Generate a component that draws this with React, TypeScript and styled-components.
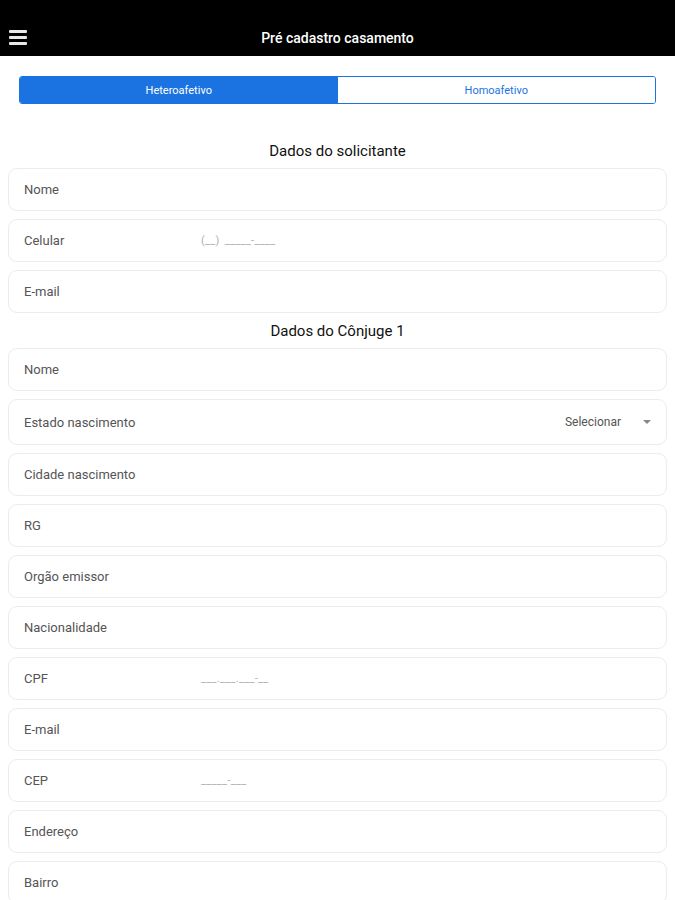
import React from 'react';
import styled, {createGlobalStyle} from 'styled-components';

const GlobalStyle = createGlobalStyle`
  html, body {
    margin: 0;
    padding: 0;
    background: #ffffff;
    font-family: Roboto, "Noto Sans", Arial, sans-serif;
  }
`;

type Field = {
  label: string,
  mask?: string,
  select?: boolean,
};

const solicitante: Field[] = [
  {label: 'Nome'},
  {label: 'Celular', mask: '(__) _____-____'},
  {label: 'E-mail'},
];

const conjuge: Field[] = [
  {label: 'Nome'},
  {label: 'Estado nascimento', select: true},
  {label: 'Cidade nascimento'},
  {label: 'RG'},
  {label: 'Orgão emissor'},
  {label: 'Nacionalidade'},
  {label: 'CPF', mask: '___.___.___-__'},
  {label: 'E-mail'},
  {label: 'CEP', mask: '_____-___'},
  {label: 'Endereço'},
  {label: 'Bairro'},
];

const FormField = ({label, mask, select}: Field) => (
  <Row tall={select}>
    <Label>{label}</Label>
    {mask && <Mask>{mask}</Mask>}
    {select && (
      <Select>
        Selecionar
        <Caret/>
      </Select>
    )}
  </Row>
);

const App = () => {
  return (
    <Page>
      <GlobalStyle/>
      <Header>
        <Menu>
          <span/><span/><span/>
        </Menu>
        <Title>Pré cadastro casamento</Title>
      </Header>
      <Segment>
        <SegButton active>Heteroafetivo</SegButton>
        <SegButton>Homoafetivo</SegButton>
      </Segment>
      <Section top={37}>
        <SectionTitle>Dados do solicitante</SectionTitle>
        {solicitante.map((f, i) => <FormField key={i} {...f}/>)}
      </Section>
      <Section top={8}>
        <SectionTitle>Dados do Cônjuge 1</SectionTitle>
        {conjuge.map((f, i) => <FormField key={i} {...f}/>)}
      </Section>
    </Page>
  );
}

const Page = styled.div`
  width: 675px;
  height: 900px;
  overflow: hidden;
  background: #fff;
`

const Header = styled.div`
  height: 56px;
  background: #000;
  display: flex;
  align-items: flex-end;
  justify-content: center;
  position: relative;
  padding-bottom: 9px;
  box-sizing: border-box;
`

const Menu = styled.div`
  position: absolute;
  left: 9px;
  top: 30px;
  width: 18px;
  display: flex;
  flex-direction: column;
  gap: 3px;
  span {
    display: block;
    height: 3px;
    background: #e8e8e8;
    border-radius: 1px;
  }
`

const Title = styled.div`
  color: #fff;
  font-size: 14px;
  font-weight: 500;
  line-height: 18px;
`

const Segment = styled.div`
  display: flex;
  margin: 20px 19px 0 19px;
  height: 28px;
  border: 1px solid #1a73e0;
  border-radius: 3px;
  overflow: hidden;
  box-sizing: border-box;
`

const SegButton = styled.div<{active?: boolean}>`
  flex: 1;
  display: flex;
  align-items: center;
  justify-content: center;
  font-size: 11px;
  background: ${p => p.active ? '#1a73e0' : '#fff'};
  color: ${p => p.active ? '#fff' : '#1a73e0'};
`

const Section = styled.div<{top: number}>`
  display: flex;
  flex-direction: column;
  gap: 7px;
  padding: 0 8px;
  margin-top: ${p => p.top}px;
  & > div + div + div {
    margin-top: 1px;
  }
`

const SectionTitle = styled.div`
  text-align: center;
  font-size: 15px;
  font-weight: 400;
  color: #111;
  line-height: 20px;
`

const Row = styled.div<{tall?: boolean}>`
  height: ${p => p.tall ? 46 : 43}px;
  border: 1px solid #ececec;
  border-radius: 9px;
  box-sizing: border-box;
  display: flex;
  align-items: center;
  padding: 0 15px;
  color: #555;
  font-size: 13px;
  flex-shrink: 0;
`

const Label = styled.div`
  width: 177px;
`

const Mask = styled.div`
  color: #b0b0b0;
  font-size: 11px;
  letter-spacing: 0.3px;
  word-spacing: 2px;
`

const Select = styled.div`
  margin-left: auto;
  display: flex;
  align-items: center;
  gap: 22px;
  font-size: 12px;
  color: #555;
`

const Caret = styled.span`
  width: 0;
  height: 0;
  border-left: 4px solid transparent;
  border-right: 4px solid transparent;
  border-top: 4px solid #888;
`

export default App;
